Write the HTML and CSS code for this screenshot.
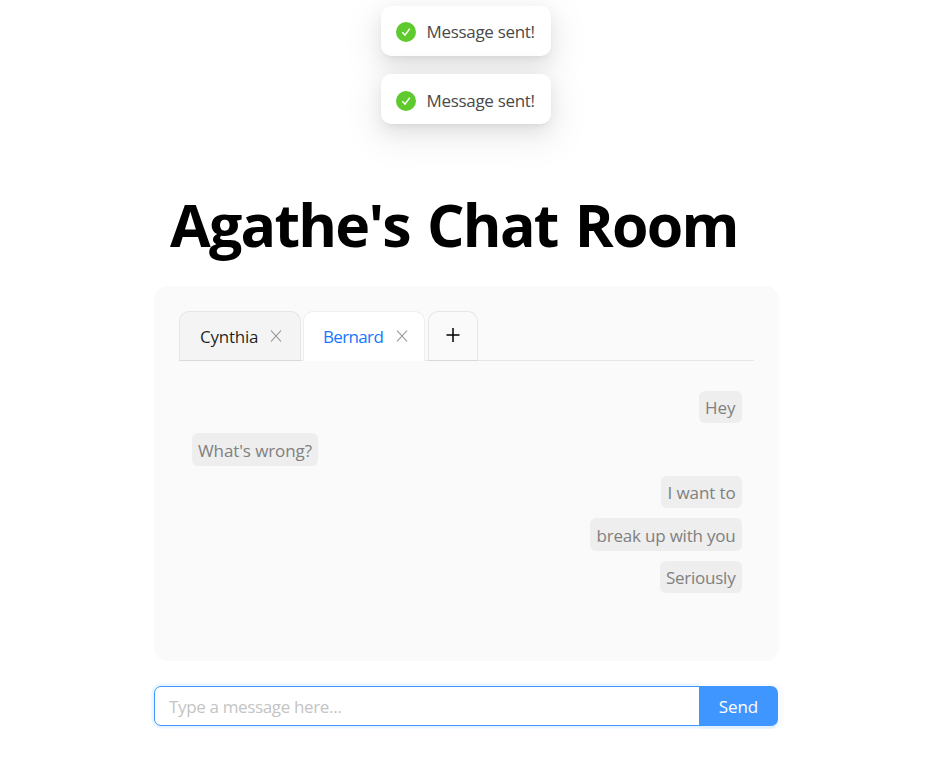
FILE: index.html
```html
<!DOCTYPE html>
<html lang="en">
<head>
<meta charset="utf-8">
<title>Chat Room</title>
<link rel="stylesheet" href="styles.css">
</head>
<body>
<div class="toasts">
  <div class="toast">
    <svg class="check" viewBox="0 0 20 20"><circle cx="10" cy="10" r="10" fill="#5fca2e"/><path d="M6.3 10.2 9 13.1 13.8 6.6" fill="none" stroke="#fff" stroke-width="1.5"/></svg>
    <span>Message sent!</span>
  </div>
  <div class="toast toast-next">
    <svg class="check" viewBox="0 0 20 20"><circle cx="10" cy="10" r="10" fill="#5fca2e"/><path d="M6.3 10.2 9 13.1 13.8 6.6" fill="none" stroke="#fff" stroke-width="1.5"/></svg>
    <span>Message sent!</span>
  </div>
</div>
<main class="room">
  <h1 class="title">Agathe's Chat Room</h1>
  <section class="panel">
    <nav class="tabs">
      <div class="tab"><span class="name-a">Cynthia</span><svg class="close" viewBox="0 0 12 12"><path d="M1 .5 11 11.5M11 .5 1 11.5"/></svg></div>
      <div class="tab active"><span class="name-b">Bernard</span><svg class="close" viewBox="0 0 12 12"><path d="M1 .5 11 11.5M11 .5 1 11.5"/></svg></div>
      <div class="tab add"><svg class="plus" viewBox="0 0 14 14"><path d="M7 0V14M.5 7H13.5"/></svg></div>
    </nav>
    <div class="messages">
      <div class="bubble mine hey">Hey</div>
      <div class="bubble wrong">What's wrong?</div>
      <div class="bubble mine want">I want to</div>
      <div class="bubble mine break">break up with you</div>
      <div class="bubble mine serious">Seriously</div>
    </div>
  </section>
  <form class="composer">
    <input class="field" type="text" placeholder="Type a message here...">
    <button class="send" type="button">Send</button>
  </form>
</main>
</body>
</html>
```
FILE: styles.css
```css
* { box-sizing: border-box; }
body {
  margin: 0;
  background: #fff;
  font-family: "Segoe UI", "Open Sans", sans-serif;
  font-size: 17px;
  line-height: 27.5px;
  height: 783px;
  overflow: hidden;
}
.toasts {
  position: absolute;
  top: 6px;
  left: 381.4px;
  display: flex;
  flex-direction: column;
  gap: 18px;
}
.toast {
  display: flex;
  align-items: center;
  width: 170px;
  height: 50px;
  padding: 2px 0 0 15px;
  gap: 10px;
  border-radius: 10px;
  background: #fff;
  color: #4a4a4a;
  letter-spacing: -.3px;
  white-space: nowrap;
  box-shadow: 0 7.5px 20px rgba(0, 0, 0, .08), 0 4px 8px -5px rgba(0, 0, 0, .12), 0 11px 35px 10px rgba(0, 0, 0, .05);
}
.toast-next { padding-top: 4px; }
.check { width: 20px; height: 20px; flex: none; }
.room {
  width: 625px;
  margin-left: 154px;
  padding-top: 184px;
}
.title {
  margin: 0 0 22px;
  padding-left: 16px;
  height: 80px;
  font-size: 59px;
  line-height: 80px;
  font-weight: 700;
  letter-spacing: -1.75px;
  word-spacing: 3.5px;
  white-space: nowrap;
  color: #000;
}
.panel {
  height: 375px;
  padding: 25px;
  border-radius: 14px;
  background: #fafafa;
}
.tabs {
  display: flex;
  height: 50px;
  gap: 2px;
  box-shadow: inset 0 -1px #e6e6e6;
}
.tab {
  display: flex;
  align-items: center;
  width: 122px;
  padding-left: 20px;
  border: 1px solid #e6e6e6;
  border-bottom-color: #d9d9d9;
  border-radius: 10px 10px 0 0;
  background: #f4f4f4;
  color: rgba(0, 0, 0, .88);
  padding-top: 1px;
  letter-spacing: -.25px;
}
.tab.active {
  background: #fff;
  border-color: #efefef;
  border-bottom-color: #fff;
  color: #1677ff;
  letter-spacing: -.65px;
  padding-left: 19px;
}
.tab.add { width: 50px; margin-left: 1px; padding: 0; justify-content: center; background: #fafafa; }
.name-a, .name-b { width: 59px; white-space: nowrap; }
.name-b { width: 62px; }
.close { width: 12px; height: 12px; margin-left: 10.5px; margin-top: -1px; fill: none; stroke: #8c8c8c; stroke-width: 1.1; }
.plus { width: 14px; height: 14px; margin-top: -2px; fill: none; stroke: #000; stroke-width: 1.5; }
.messages {
  display: flex;
  flex-direction: column;
  align-items: flex-start;
  gap: 10px;
  padding: 29.6px 12px 0 13px;
}
.bubble {
  height: 32.5px;
  padding: 1px 0 0 6px;
  line-height: 32px;
  border-radius: 6px;
  background: #eee;
  color: #808080;
  letter-spacing: -.1px;
  white-space: nowrap;
}
.mine { align-self: flex-end; }
.hey { width: 43px; }
.wrong { width: 126px; padding-top: 1.5px; }
.want { width: 81px; padding-left: 6.5px; }
.break { width: 152px; padding: 1.5px 0 0 6.5px; letter-spacing: -.2px; }
.serious { width: 82px; letter-spacing: -.25px; }
.composer { display: flex; height: 40px; margin-top: 25px; width: 624px; }
.field {
  position: relative;
  z-index: 1;
  width: 546px;
  padding: 0 14px;
  border: 1px solid #4096ff;
  border-radius: 7px 0 0 7px;
  outline: 0;
  background: #fff;
  font: 17px "Segoe UI", "Open Sans", sans-serif;
  letter-spacing: -.35px;
  box-shadow: 0 0 0 2.5px #e9f5ff;
}
.field::placeholder { color: #c4c4c4; opacity: 1; }
.send {
  position: relative;
  z-index: 1;
  flex: 1;
  margin-left: -1px;
  padding: 1px 0 0;
  border: 0;
  border-radius: 0 7px 7px 0;
  background: #4096ff;
  color: #fff;
  font: 17px "Segoe UI", "Open Sans", sans-serif;
  letter-spacing: -.1px;
  box-shadow: 0 2.5px 0 rgba(5, 145, 255, .1), 3px 0 0 3px #f9fbff;
}
```
